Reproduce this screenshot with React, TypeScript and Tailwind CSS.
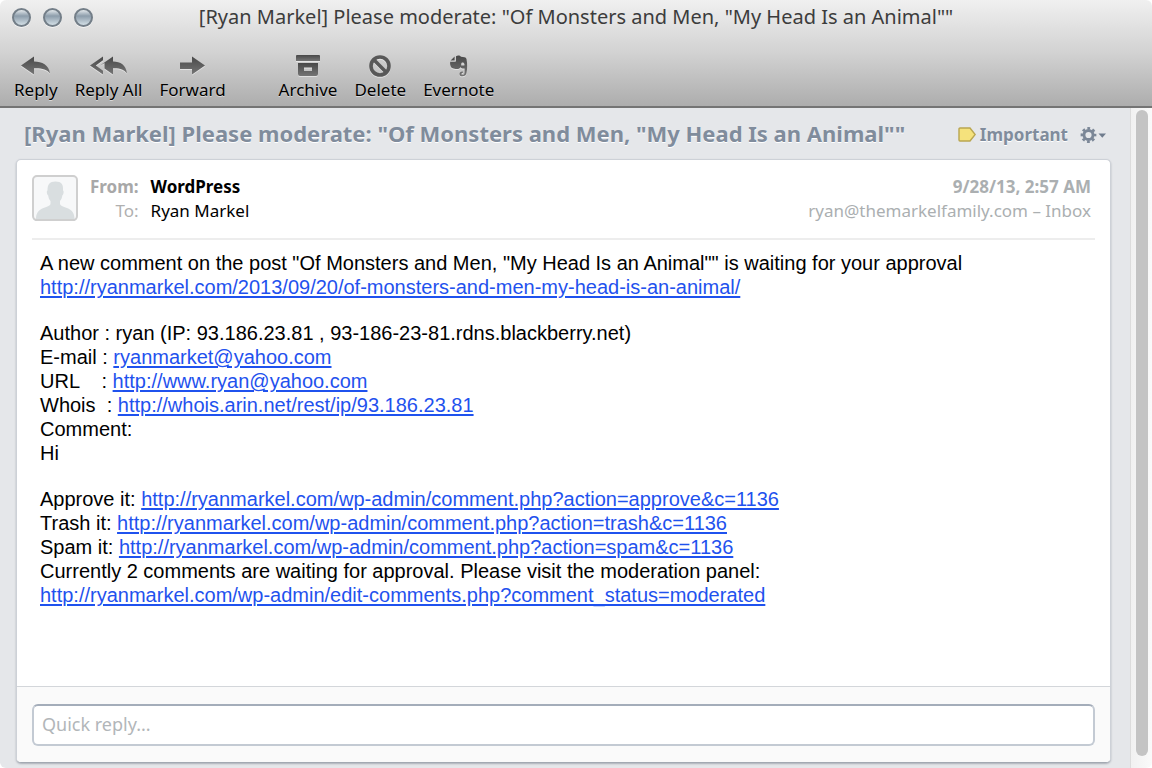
import type { ReactNode } from "react";

const SUBJECT = '[Ryan Markel] Please moderate: "Of Monsters and Men, "My Head Is an Animal""';

function IconGradient() {
  return (
    <svg className="absolute h-0 w-0" aria-hidden="true">
      <defs>
        <linearGradient id="ink" x1="0" y1="0" x2="0" y2="1">
          <stop offset="0" stopColor="#484848" />
          <stop offset="1" stopColor="#757575" />
        </linearGradient>
      </defs>
    </svg>
  );
}

function ReplyIcon() {
  return (
    <svg width="30" height="20" viewBox="0 0 30 20" fill="url(#ink)" aria-hidden="true">
      <path d="M0 9.500 13 .5v5C21 5.500 28 9 29 17.500c-3-4-8-5.500-16-5.200V18.500z" />
    </svg>
  );
}

function ReplyAllIcon() {
  return (
    <svg width="38" height="20" viewBox="0 0 38 20" fill="url(#ink)" aria-hidden="true">
      <path d="M0 9.500 13 .5v3.700L5.800 9.500 13 14.800v3.700z" />
      <path d="M10 9.500 23 .5v5c7.500 0 13 3.500 14 12-3-4-7-5.500-14-5.200v6.200l-8.500-6V7z" />
    </svg>
  );
}

function ForwardIcon() {
  return (
    <svg width="26" height="20" viewBox="0 0 26 20" fill="url(#ink)" aria-hidden="true">
      <path d="M0 6.500h12V.5l13 9L12 18.500v-5.500H0z" />
    </svg>
  );
}

function ArchiveIcon() {
  return (
    <svg width="24" height="22" viewBox="0 0 24 22" fill="url(#ink)" aria-hidden="true">
      <path d="M1 0h22a1 1 0 0 1 1 1v5H0V1a1 1 0 0 1 1-1z" />
      <path fillRule="evenodd" d="M2 8h20v11a2 2 0 0 1-2 2H4a2 2 0 0 1-2-2zM8 12.500v3.500h8v-3.500z" />
    </svg>
  );
}

function DeleteIcon() {
  return (
    <svg width="22" height="22" viewBox="0 0 22 22" fill="none" stroke="#585858" strokeWidth="3.600" aria-hidden="true">
      <circle cx="11" cy="11" r="9" />
      <path d="M4.800 4.800 17.200 17.200" />
    </svg>
  );
}

function EvernoteIcon() {
  return (
    <svg width="20" height="22" viewBox="0 0 20 22" aria-hidden="true">
      <path
        fill="url(#ink)"
        d="M7 1.200C8.500.3 11 .3 12 1.800c2.500.2 5 .2 5.500 2.200.9 4.500.9 10 0 14-.5 2.300-1.700 3.300-4.200 3.300-2 0-2.800-1-2.800-2.400 0-1.700 1.200-2.600 3.300-2.400V18c-.9 0-1.300.3-1.300.9s.5.900 1.200.9c1.500 0 1.900-.8 1.900-3.300V13.500c-2 .2-3.600-.2-4.100-1.500-.6 1.800-2.300 2.300-4.900 2C3.500 13.600 1.900 13 1.300 10.300 1 8.800 1 7.800 1.300 6.800H6c.7 0 1-.4 1-1z"
      />
      <path fill="#4c4c4c" d="M5.600 1.400v4H1.600z" />
      <path fill="#d2d2d2" d="M12.200 8.800c.2-1.900 3-1.900 3.200.5v1.200h-3.200z" />
    </svg>
  );
}

function ToolButton({ label, icon }: { label: string; icon: ReactNode }) {
  return (
    <button
      type="button"
      className="flex flex-col items-center text-[17px] leading-6 text-black [text-shadow:0_1px_0_rgba(255,255,255,0.5)]"
    >
      <span className="flex h-6 items-center drop-shadow-[0_1px_0_rgba(255,255,255,0.5)]">{icon}</span>
      {label}
    </button>
  );
}

function WindowButton({ label }: { label: string }) {
  return (
    <button
      type="button"
      aria-label={label}
      className="size-[19px] rounded-full border-2 border-[#737e88] bg-linear-to-b from-[#e4e9ec] via-[#8d9dab] via-40% to-[#d3dfe6] shadow-[0_1px_0_rgba(255,255,255,0.6)]"
    />
  );
}

function MailLink({ href, children }: { href: string; children: string }) {
  return (
    <a href={href} className="text-[#1f52ee] underline decoration-2 underline-offset-2">
      {children}
    </a>
  );
}

export default function App() {
  return (
    <div className="flex min-h-screen flex-col bg-white font-['Lucida_Grande','Noto_Sans',sans-serif]">
      <IconGradient />
      <header className="rounded-t-md border-b-2 border-[#747474] bg-linear-to-b from-[#f0f0f0] via-[#d2d2d2] to-[#adadad] pb-1">
        <div className="flex h-[34px] items-center px-3">
          <div className="flex flex-1 gap-3">
            <WindowButton label="Close" />
            <WindowButton label="Minimize" />
            <WindowButton label="Zoom" />
          </div>
          <h1 className="text-[20px] leading-6 whitespace-nowrap text-[#3c3c3c]">{SUBJECT}</h1>
          <div className="flex-1" />
        </div>
        <nav className="flex gap-[53px] px-[14px] pt-5">
          <div className="flex gap-[17px]">
            <ToolButton label="Reply" icon={<ReplyIcon />} />
            <ToolButton label="Reply All" icon={<ReplyAllIcon />} />
            <ToolButton label="Forward" icon={<ForwardIcon />} />
          </div>
          <div className="flex gap-[17px]">
            <ToolButton label="Archive" icon={<ArchiveIcon />} />
            <ToolButton label="Delete" icon={<DeleteIcon />} />
            <ToolButton label="Evernote" icon={<EvernoteIcon />} />
          </div>
        </nav>
      </header>

      <div className="flex flex-1">
        <main className="flex min-w-0 flex-1 flex-col rounded-bl-md bg-[#e5e7ea] pr-[19px] pb-[5px] pl-4">
          <div className="flex h-[51px] items-center justify-between pr-1 pb-[2px] pl-2 font-bold text-[#808c9c] [text-shadow:0_1px_0_#fff]">
            <h2 className="text-[22px] leading-8 whitespace-nowrap">{SUBJECT}</h2>
            <div className="flex items-center gap-3 pt-1">
              <span className="flex items-center gap-1 text-[17px] leading-6">
                <svg width="18" height="15" viewBox="0 0 18 15" aria-hidden="true">
                  <path d="M1 2a1 1 0 0 1 1-1h10l5.200 6.500L12 14H2a1 1 0 0 1-1-1z" fill="#f5e27c" stroke="#b9a650" strokeWidth="1.400" />
                </svg>
                Important
              </span>
              <button type="button" aria-label="Message actions" className="flex items-center">
                <svg width="27" height="18" viewBox="0 0 27 18" fill="none" aria-hidden="true">
                  <circle cx="8.500" cy="9" r="4.600" stroke="#7b8797" strokeWidth="3" />
                  <circle cx="8.500" cy="9" r="6.700" stroke="#7b8797" strokeWidth="2.400" strokeDasharray="2.800 2.462" strokeDashoffset="1.400" />
                  <path d="M18.500 7.500h7.500l-3.700 4.300z" fill="#6f7c8d" />
                </svg>
              </button>
            </div>
          </div>

          <article className="flex flex-1 flex-col overflow-hidden rounded-[5px] border border-[#cdd1d7] border-b-[#a3a9b2] bg-white shadow-[0_1px_2px_rgba(60,70,90,0.35)]">
            <header className="mx-[15px] flex items-start gap-3 border-b-2 border-[#ededed] pt-[15px] pb-[15px] text-[17px]">
              <svg width="46" height="47" viewBox="0 0 46 47" role="img" aria-label="WordPress">
                <rect x="1" y="2" width="44" height="44" rx="4" fill="#c2c5c8" />
                <rect x="1" y="1" width="44" height="44" rx="4" fill="#f7f8f9" stroke="#cfcfcf" strokeWidth="2" />
                <path
                  d="M4 44c0-6 2.500-9 7.500-11 4-1.600 7-2 7-4.500v-2.500c-1.500-1.500-2-3.500-2.300-5.500-1.500-1-1.800-4.500-.7-5C15.500 9.500 17.500 6.500 23.500 6.500S31.500 9.500 31 15.500c1.100.5.8 4-.7 5-.3 2-.8 4-2.300 5.500v2.500c0 2.500 3 2.900 7 4.500 5 2 7.500 5 7.500 11z"
                  fill="#d9dee0"
                />
              </svg>
              <dl className="grid grid-cols-[auto_1fr] gap-x-3 leading-6">
                <dt className="text-right font-bold text-[#a8a8a8]">From:</dt>
                <dd className="font-bold text-black">WordPress</dd>
                <dt className="text-right text-[#b0b0b0]">To:</dt>
                <dd className="text-black">Ryan Markel</dd>
              </dl>
              <div className="ml-auto pr-1 text-right leading-6 text-[#abafb1]">
                <p className="font-bold">9/28/13, 2:57 AM</p>
                <p>ryan@themarkelfamily.com – Inbox</p>
              </div>
            </header>

            <div className="flex-1 space-y-[22px] px-[23px] pt-[11px] pb-8 font-['Liberation_Sans',Arial,sans-serif] text-[20px] leading-6 text-black">
              <p>
                A new comment on the post "Of Monsters and Men, "My Head Is an Animal"" is waiting for your approval
                <br />
                <MailLink href="http://ryanmarkel.com/2013/09/20/of-monsters-and-men-my-head-is-an-animal/">
                  http://ryanmarkel.com/2013/09/20/of-monsters-and-men-my-head-is-an-animal/
                </MailLink>
              </p>
              <p>
                Author : ryan (IP: 93.186.23.81 , 93-186-23-81.rdns.blackberry.net)
                <br />
                E-mail : <MailLink href="mailto:ryanmarket@yahoo.com">ryanmarket@yahoo.com</MailLink>
                <br />
                <span className="whitespace-pre">{"URL    : "}</span>
                <MailLink href="http://www.ryan@yahoo.com">http://www.ryan@yahoo.com</MailLink>
                <br />
                <span className="whitespace-pre">{"Whois  : "}</span>
                <MailLink href="http://whois.arin.net/rest/ip/93.186.23.81">http://whois.arin.net/rest/ip/93.186.23.81</MailLink>
                <br />
                Comment:
                <br />
                Hi
              </p>
              <p>
                Approve it:{" "}
                <MailLink href="http://ryanmarkel.com/wp-admin/comment.php?action=approve&c=1136">
                  http://ryanmarkel.com/wp-admin/comment.php?action=approve&c=1136
                </MailLink>
                <br />
                Trash it:{" "}
                <MailLink href="http://ryanmarkel.com/wp-admin/comment.php?action=trash&c=1136">
                  http://ryanmarkel.com/wp-admin/comment.php?action=trash&c=1136
                </MailLink>
                <br />
                Spam it:{" "}
                <MailLink href="http://ryanmarkel.com/wp-admin/comment.php?action=spam&c=1136">
                  http://ryanmarkel.com/wp-admin/comment.php?action=spam&c=1136
                </MailLink>
                <br />
                Currently 2 comments are waiting for approval. Please visit the moderation panel:
                <br />
                <MailLink href="http://ryanmarkel.com/wp-admin/edit-comments.php?comment_status=moderated">
                  http://ryanmarkel.com/wp-admin/edit-comments.php?comment_status=moderated
                </MailLink>
              </p>
            </div>

            <form className="border-t border-[#d3d6da] bg-[#fafafa] px-[15px] pt-[17px] pb-4">
              <input
                type="text"
                aria-label="Quick reply"
                placeholder="Quick reply..."
                className="block h-[42px] w-full rounded-md border-2 border-[#c3cad3] border-t-[#a4adba] bg-white px-2 pb-[2px] text-[18px] leading-6 outline-none placeholder:text-[#b2b6b9]"
              />
            </form>
          </article>
        </main>

        <div className="flex w-[22px] justify-center rounded-br-md border-l border-[#dcdcdc] bg-linear-to-r from-[#f1f1f1] to-[#fafafa] pt-[2px] pb-3" aria-hidden="true">
          <div className="w-3 rounded-full bg-[#c4c4c4]" />
        </div>
      </div>
    </div>
  );
}
